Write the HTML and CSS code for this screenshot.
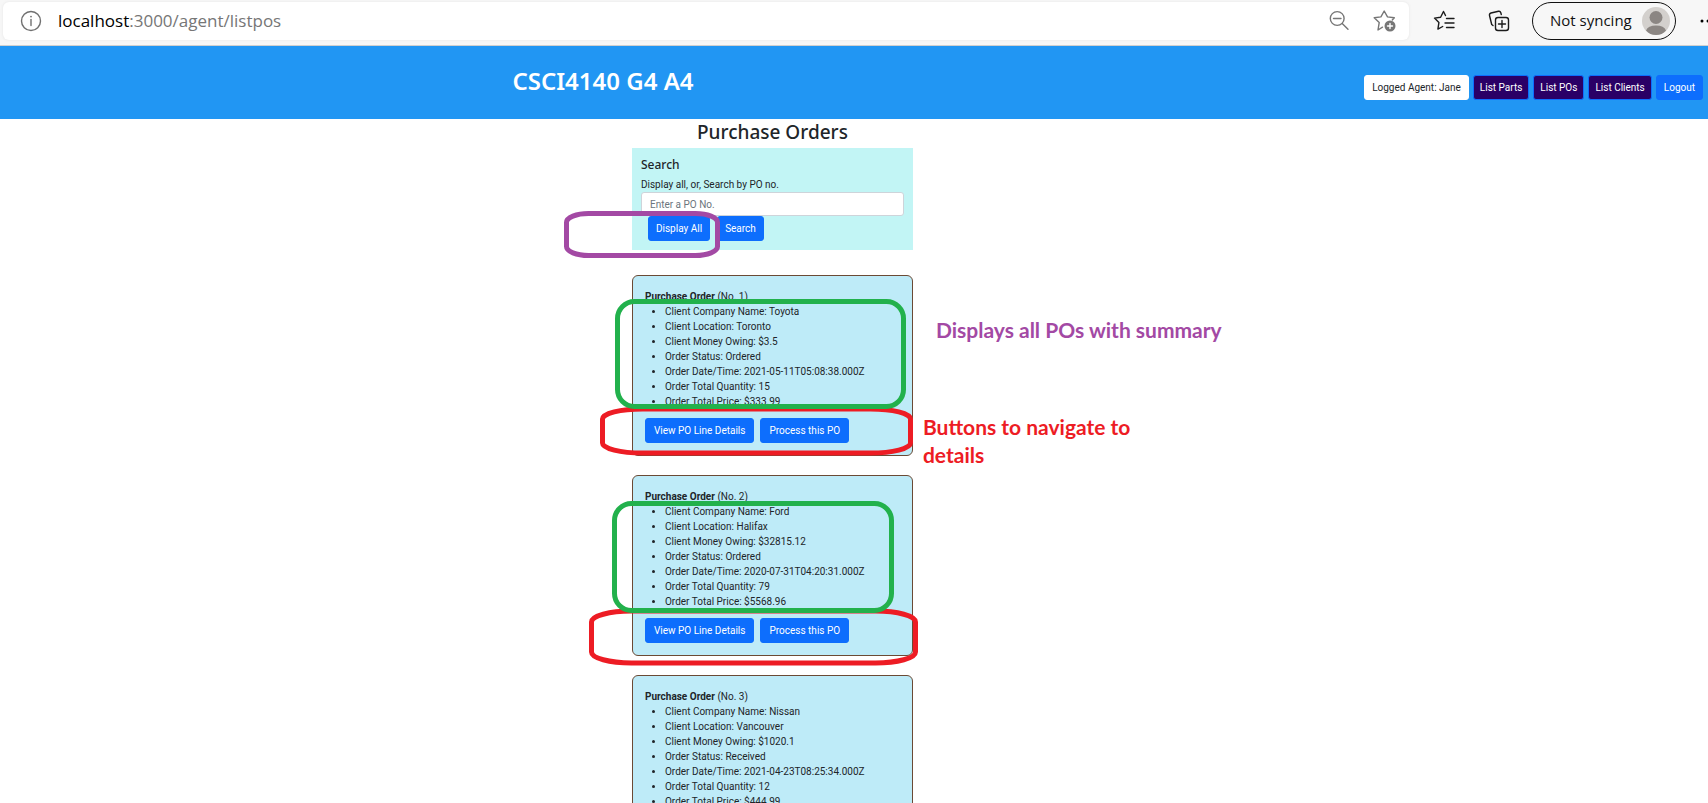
FILE: index.html
```html
<!DOCTYPE html>
<html lang="en">
<head>
<meta charset="utf-8">
<title>Purchase Orders</title>
<link rel="stylesheet" href="styles.css">
</head>
<body>
<div class="toolbar">
  <div class="address">
    <svg class="icon" viewBox="0 0 22 22" width="22" height="22" aria-hidden="true"><circle cx="11" cy="11" r="9.5"/><path d="M11 9.5v6"/><circle class="dot" cx="11" cy="6.6" r="0.9"/></svg>
    <a class="url" href="#">localhost<span>:3000/agent/listpos</span></a>
    <button class="tool" aria-label="Zoom out"><svg class="icon" viewBox="0 0 22 22" width="22" height="22"><circle cx="9.2" cy="8.5" r="6.9"/><path d="M5.5 8.5h7.5M14.2 13.5l5.8 5.8"/></svg></button>
    <button class="tool tool-star" aria-label="Add to favorites"><svg class="icon" viewBox="0 0 24 24" width="24" height="24"><path d="M9.5 18.200 5 21l1.200-7.400L1.200 8.800l6.700-.9L11.200 2l3.300 5.900 6.800.9-2 2.200"/><circle class="dot" cx="17" cy="17" r="5.500"/><path class="plus" d="M14.500 17h5M17 14.500v5"/></svg></button>
  </div>
  <button class="tool dark tool-list" aria-label="Favorites"><svg class="icon" viewBox="0 0 22 22" width="22" height="22"><path d="M12.500 5.500 10.500 1.500 7.600 7.200 1.500 8.100l4.400 4.500-1 6.500 4.800-2.600M13.500 8.500H21M12 13h9M13.500 17.500H21"/></svg></button>
  <button class="tool dark tool-collections" aria-label="Collections"><svg class="icon" viewBox="0 0 22 22" width="22" height="22"><rect x="7.500" y="7.500" width="13" height="13" rx="2.500"/><path d="M14 10.500v7M10.500 14h7M5 15.500 3.700 14.500 1.500 5.500Q1.200 3.500 3 3L10.500 1.300Q12.300 1 12.800 2.800L13.300 4.500"/></svg></button>
  <button class="profile">Not syncing
    <svg viewBox="0 0 28 28" width="28" height="28" aria-hidden="true"><circle cx="14" cy="14" r="14" fill="#d3d0cd"/><circle cx="14" cy="10.500" r="6.500" fill="#8b8683"/><path d="M4 23.500Q6 18.500 14 18.500t10 5Q20 28 14 28T4 23.500z" fill="#8b8683"/></svg>
  </button>
  <button class="more" aria-label="Settings and more"><svg viewBox="0 0 16 4" width="16" height="4"><circle cx="2" cy="2" r="1.500"/><circle cx="8" cy="2" r="1.500"/><circle cx="14" cy="2" r="1.500"/></svg></button>
</div>

<header class="site-header">
  <h1>CSCI4140 G4 A4</h1>
  <nav class="nav">
    <button class="btn btn-light">Logged Agent: Jane</button>
    <button class="btn btn-nav">List Parts</button>
    <button class="btn btn-nav">List POs</button>
    <button class="btn btn-nav">List Clients</button>
    <button class="btn">Logout</button>
  </nav>
</header>

<main class="orders">
  <h2>Purchase Orders</h2>
  <form class="search">
    <h3>Search</h3>
    <label for="po">Display all, or, Search by PO no.</label>
    <input id="po" type="text" placeholder="Enter a PO No.">
    <div class="search-actions">
      <button type="button" class="btn">Display All</button>
      <button type="button" class="btn">Search</button>
    </div>
  </form>

  <article class="card">
    <p><strong>Purchase Order</strong> (No. 1)</p>
    <ul>
      <li>Client Company Name: Toyota</li>
      <li>Client Location: Toronto</li>
      <li>Client Money Owing: $3.5</li>
      <li>Order Status: Ordered</li>
      <li>Order Date/Time: 2021-05-11T05:08:38.000Z</li>
      <li>Order Total Quantity: 15</li>
      <li>Order Total Price: $333.99</li>
    </ul>
    <div class="card-actions"><button class="btn">View PO Line Details</button><button class="btn">Process this PO</button></div>
  </article>

  <article class="card">
    <p><strong>Purchase Order</strong> (No. 2)</p>
    <ul>
      <li>Client Company Name: Ford</li>
      <li>Client Location: Halifax</li>
      <li>Client Money Owing: $32815.12</li>
      <li>Order Status: Ordered</li>
      <li>Order Date/Time: 2020-07-31T04:20:31.000Z</li>
      <li>Order Total Quantity: 79</li>
      <li>Order Total Price: $5568.96</li>
    </ul>
    <div class="card-actions"><button class="btn">View PO Line Details</button><button class="btn">Process this PO</button></div>
  </article>

  <article class="card">
    <p><strong>Purchase Order</strong> (No. 3)</p>
    <ul>
      <li>Client Company Name: Nissan</li>
      <li>Client Location: Vancouver</li>
      <li>Client Money Owing: $1020.1</li>
      <li>Order Status: Received</li>
      <li>Order Date/Time: 2021-04-23T08:25:34.000Z</li>
      <li>Order Total Quantity: 12</li>
      <li>Order Total Price: $444.99</li>
    </ul>
    <div class="card-actions"><button class="btn">View PO Line Details</button><button class="btn">Process this PO</button></div>
  </article>

  <svg class="marks" viewBox="0 0 400 500" width="400" height="500" aria-hidden="true">
    <rect class="purple" x="34.500" y="94.500" width="151" height="42" rx="22" ry="9"/>
    <rect class="red" x="70.500" y="290" width="308" height="44" rx="40" ry="10"/>
    <rect class="red" x="59.500" y="492" width="324" height="52" rx="40" ry="11"/>
    <rect class="green" x="85.500" y="182.500" width="286" height="105" rx="17"/>
    <rect class="green" x="82.500" y="384.500" width="277" height="107" rx="17"/>
  </svg>
  <p class="note note-purple">Displays all POs with summary</p>
  <p class="note note-red">Buttons to navigate to<br>details</p>
</main>
</body>
</html>
```
FILE: styles.css
```css
* { box-sizing: border-box; }
body {
  margin: 0;
  height: 100vh;
  overflow: hidden;
  background: #fff;
  color: #212529;
  font: 10px/15px Roboto, "Open Sans", sans-serif;
}
h1, h2, h3, p, ul { margin: 0; padding: 0; }
button { font: inherit; cursor: pointer; }

.toolbar {
  display: flex;
  align-items: center;
  height: 46px;
  padding: 0 0 4px 3px;
  overflow: hidden;
  background: #f7f7f7;
  border-bottom: 1px solid #d0d0d0;
  font-family: "Open Sans", sans-serif;
}
.address {
  display: flex;
  align-items: center;
  flex: 1;
  height: 38px;
  padding: 0 12px 0 17px;
  background: #fff;
  border-radius: 6px;
  box-shadow: 0 0 3px #e4e4e4;
  color: #707070;
}
.url {
  flex: 1;
  margin-left: 16px;
  color: #000;
  font-size: 17px;
  line-height: 24px;
  text-decoration: none;
}
.url span { color: #767676; }
.icon { display: block; fill: none; stroke: currentColor; stroke-width: 1.4; stroke-linejoin: round; stroke-linecap: round; }
.icon .dot { fill: currentColor; stroke: none; }
.icon .plus { stroke: #fff; }
.tool { padding: 0; border: 0; background: none; color: #767676; }
.tool-star { margin-left: 23px; }
.dark { color: #1b1b1b; }
.tool-list { margin-left: 24px; }
.tool-collections { margin-left: 33px; }
.profile {
  display: flex;
  align-items: center;
  justify-content: space-between;
  flex: none;
  width: 144px;
  height: 38px;
  margin-left: 22px;
  padding: 0 5px 0 17px;
  border: 1px solid #111;
  border-radius: 19px;
  background: #f7f7f7;
  color: #111;
  font-size: 15px;
}
.more { flex: none; width: 32px; padding: 0 0 0 24px; border: 0; background: none; overflow: hidden; }
.more svg { display: block; }

.site-header {
  display: flex;
  justify-content: space-between;
  height: 73px;
  padding: 0 5px 0 30%;
  background: #2196f3;
  color: #fff;
}
h1, h2, h3 { font-family: "Noto Sans", "Open Sans", sans-serif; }
.site-header h1 { padding-top: 20px; font-size: 24px; line-height: 30px; font-weight: 600; }
.nav { display: flex; align-items: flex-start; gap: 4px; padding-top: 29px; }

.btn {
  height: 25px;
  padding: 0 8px;
  border: 1px solid #0d6efd;
  border-radius: 3px;
  background: #0d6efd;
  color: #fff;
  line-height: 15px;
  white-space: nowrap;
}
.nav .btn { padding: 0 7px; }
.nav .btn-light { background: #fff; border-color: #fff; color: #212529; }
.nav .btn-nav { padding: 0 6px; background: #2a0066; }

.orders { position: relative; width: 281px; margin-left: 37%; }
.orders h2 { height: 29px; font-size: 19px; line-height: 26px; font-weight: 500; text-align: center; }
.search { height: 102px; padding: 8px 9px; background: #c2f5f5; }
.search h3 { font-size: 12px; line-height: 17px; font-weight: 500; }
.search label { display: block; padding-top: 4px; }
.search input {
  display: block;
  width: 100%;
  height: 24px;
  padding: 0 8px;
  border: 1px solid #ced4da;
  border-radius: 3px;
  background: #fff;
  color: #212529;
  font: inherit;
}
.search input::placeholder { color: #6c757d; opacity: 1; }
.search-actions { display: flex; gap: 7px; padding-left: 7px; }
.search-actions .btn { padding: 0 7px; }

.card {
  margin-bottom: 19px;
  padding: 13px 12px 12px;
  border: 1px solid #6b4a35;
  border-radius: 6px;
  background: #beebf8;
}
.search + .card { margin-top: 25px; }
.card strong { font-weight: 700; }
.card ul { padding-left: 20px; }
.card-actions { display: flex; gap: 6px; padding-top: 9px; }

.marks { position: absolute; top: 0; left: -100px; overflow: visible; pointer-events: none; }
.marks rect { fill: none; stroke-width: 5; }
.marks .purple { stroke: #a349a4; }
.marks .red { stroke: #ed1c24; }
.marks .green { stroke: #22b14c; }
.note { position: absolute; font: 700 21px/28px Lato, sans-serif; white-space: nowrap; }
.note-purple { top: 197px; left: 304px; color: #a349a4; }
.note-red { top: 294px; left: 291px; color: #ed1c24; }
```
